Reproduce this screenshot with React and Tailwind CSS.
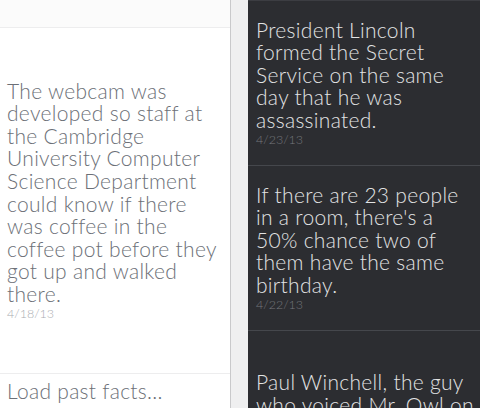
const RIGHT_FACTS = [
  {
    lines: ['President Lincoln', 'formed the Secret', 'Service on the same', 'day that he was', 'assassinated.'],
    date: '4/23/13',
    height: 'h-[165px]',
  },
  {
    lines: ['If there are 23 people', "in a room, there's a", '50% chance two of', 'them have the same', 'birthday.'],
    date: '4/22/13',
    height: 'h-[165px]',
  },
  {
    lines: [
      'Paul Winchell, the guy',
      'who voiced Mr. Owl on',
      'the Tootsie Pop',
      'commercials, was also',
      'the first person to',
      'invent an artificial',
      'heart.',
    ],
    date: '4/21/13',
    height: 'h-[256px]',
  },
]

const LEFT_LINES = [
  'The webcam was',
  'developed so staff at',
  'the Cambridge',
  'University Computer',
  'Science Department',
  'could know if there',
  'was coffee in the',
  'coffee pot before they',
  'got up and walked',
  'there.',
]

const font = { fontFamily: 'Lato, "Open Sans", sans-serif' }

function Lines({ lines }) {
  return lines.map((l, i) => (
    <span key={i} className="block whitespace-nowrap">{l}</span>
  ))
}

function DarkFact({ fact }) {
  return (
    <div className={`${fact.height} shrink-0 flex flex-col justify-center border-b border-[#45474c] pl-2`}>
      <p className="text-[21px] leading-[22.6px] font-light tracking-[0.3px] text-[#e2e3e4]">
        <Lines lines={fact.lines} />
      </p>
      <p className="text-[12.5px] leading-[14px] mt-[2px] font-light text-[#75777c]">{fact.date}</p>
    </div>
  )
}

export default function App() {
  return (
    <div className="w-[480px] h-[408px] flex overflow-hidden bg-white" style={font}>
      <div className="w-[231px] shrink-0 flex flex-col border-r border-[#c9c9cb] bg-white">
        <div className="h-[28px] shrink-0 bg-[#fbfbfb] border-b border-[#ededee]" />
        <div className="flex-1 flex flex-col justify-center pl-[7px]">
          <p className="text-[21px] leading-[22.6px] font-light tracking-[0.3px] text-[#6c7077]">
            <Lines lines={LEFT_LINES} />
          </p>
          <p className="text-[12.5px] leading-[14px] mt-[2px] font-light text-[#a9acb1]">4/18/13</p>
        </div>
        <div className="h-[35px] shrink-0 border-t border-[#ededee] pl-[7px] pt-[5px]">
          <p className="text-[21px] leading-[24px] font-light tracking-[0.3px] text-[#6c7077]">Load past facts...</p>
        </div>
      </div>
      <div className="w-[17px] shrink-0 bg-[#efeff0]" />
      <div className="flex-1 flex flex-col bg-[#2c2d31] border-t border-[#3c3d42]">
        {RIGHT_FACTS.map(f => (
          <DarkFact key={f.date} fact={f} />
        ))}
      </div>
    </div>
  )
}
